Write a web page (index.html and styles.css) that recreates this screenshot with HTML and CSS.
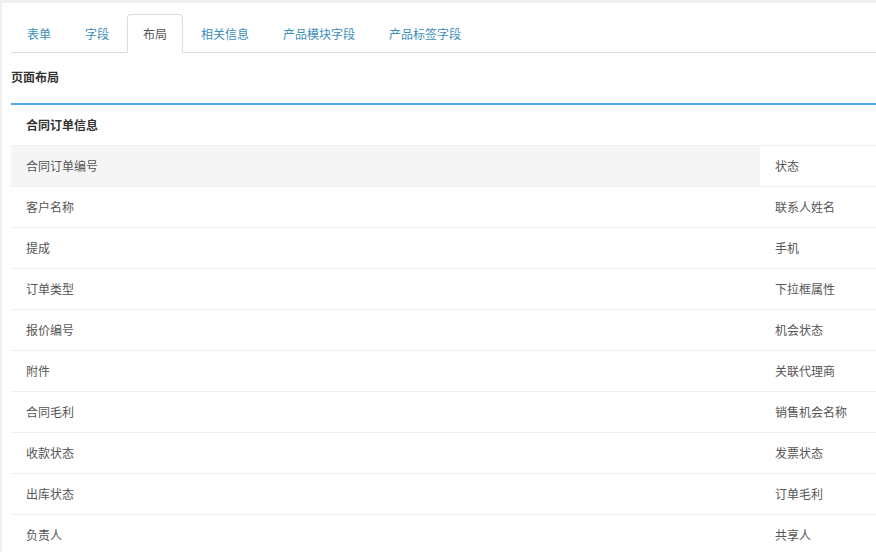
FILE: index.html
```html
<!DOCTYPE html>
<html lang="zh-CN">
<head>
<meta charset="utf-8">
<title>布局</title>
<link rel="stylesheet" href="styles.css">
</head>
<body>
<div class="panel">
  <ul class="tabs">
    <li class="tab"><a>表单</a></li>
    <li class="tab"><a>字段</a></li>
    <li class="tab active"><a>布局</a></li>
    <li class="tab"><a>相关信息</a></li>
    <li class="tab"><a>产品模块字段</a></li>
    <li class="tab"><a>产品标签字段</a></li>
  </ul>
  <div class="page-title">页面布局</div>
  <div class="section">
    <div class="section-head">合同订单信息</div>
    <div class="grid">
      <div class="cell hover">合同订单编号</div><div class="cell">状态</div>
      <div class="cell">客户名称</div><div class="cell">联系人姓名</div>
      <div class="cell">提成</div><div class="cell">手机</div>
      <div class="cell">订单类型</div><div class="cell">下拉框属性</div>
      <div class="cell">报价编号</div><div class="cell">机会状态</div>
      <div class="cell">附件</div><div class="cell">关联代理商</div>
      <div class="cell">合同毛利</div><div class="cell">销售机会名称</div>
      <div class="cell">收款状态</div><div class="cell">发票状态</div>
      <div class="cell">出库状态</div><div class="cell">订单毛利</div>
      <div class="cell">负责人</div><div class="cell">共享人</div>
    </div>
  </div>
</div>
</body>
</html>
```
FILE: styles.css
```css
html, body {
  margin: 0;
  padding: 0;
  overflow: hidden;
  height: 100%;
}
body {
  background: #efeff4;
  font-family: "Noto Sans CJK SC", "Noto Sans", sans-serif;
  font-size: 12px;
  color: #555;
}
.panel {
  margin: 3px 0 0 2px;
  background: #fff;
  padding: 11px 0 0 9px;
  min-height: 600px;
}
.tabs {
  list-style: none;
  margin: 0;
  padding: 0;
  display: flex;
  border-bottom: 1px solid #ddd;
}
.tab {
  margin-bottom: -1px;
}
.tab a {
  display: block;
  margin-right: 2px;
  padding: 10px 15px;
  line-height: 17px;
  border: 1px solid transparent;
  border-radius: 4px 4px 0 0;
  color: #3c8dbc;
  cursor: pointer;
}
.tab.active a {
  color: #555;
  background: #fff;
  border-color: #ddd #ddd transparent #ddd;
}
.page-title {
  font-weight: bold;
  color: #333;
  line-height: 17px;
  padding: 15px 0 18px 0;
  border-bottom: 2px solid #52a7e5;
}
.section-head {
  font-weight: bold;
  color: #333;
  height: 40px;
  line-height: 40px;
  padding-left: 15px;
}
.grid {
  display: grid;
  grid-template-columns: 749px 1fr;
}
.cell {
  height: 40px;
  line-height: 40px;
  padding-left: 15px;
  border-top: 1px solid #f0f0f0;
  color: #555;
  white-space: nowrap;
}
.cell.hover {
  background: #f5f5f5;
}
```
